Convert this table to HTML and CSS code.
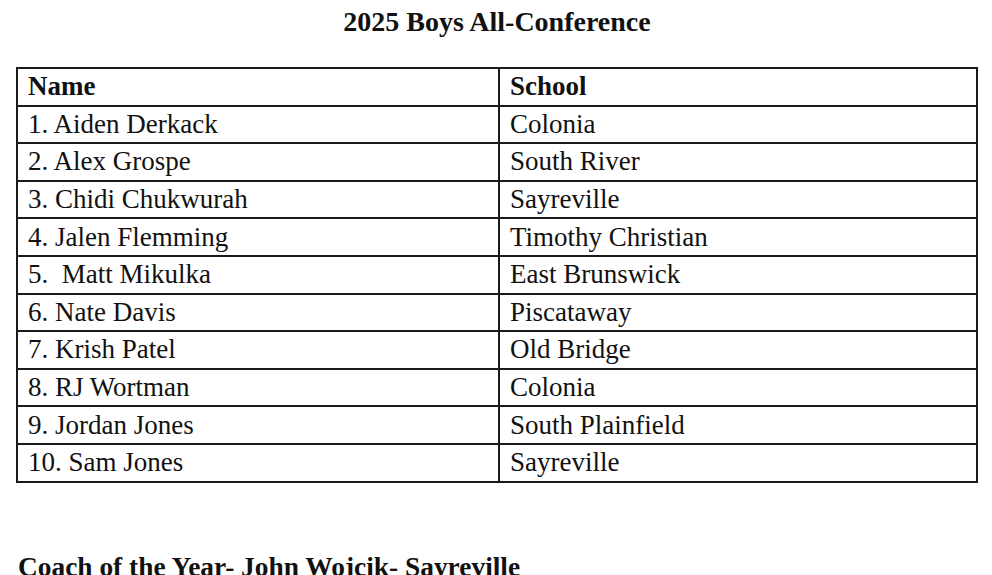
FILE: index.html
```html
<!DOCTYPE html>
<html>
<head>
<meta charset="utf-8">
<link rel="stylesheet" href="styles.css">
</head>
<body>
<div class="page">
  <h1 class="title">2025 Boys All-Conference</h1>
  <table class="roster">
    <tr class="head"><td class="c1">Name</td><td class="c2">School</td></tr>
    <tr><td>1. Aiden Derkack</td><td>Colonia</td></tr>
    <tr><td>2. Alex Grospe</td><td>South River</td></tr>
    <tr><td>3. Chidi Chukwurah</td><td>Sayreville</td></tr>
    <tr><td>4. Jalen Flemming</td><td>Timothy Christian</td></tr>
    <tr><td>5.&nbsp; Matt Mikulka</td><td>East Brunswick</td></tr>
    <tr><td>6. Nate Davis</td><td>Piscataway</td></tr>
    <tr><td>7. Krish Patel</td><td>Old Bridge</td></tr>
    <tr><td>8. RJ Wortman</td><td>Colonia</td></tr>
    <tr><td>9. Jordan Jones</td><td>South Plainfield</td></tr>
    <tr><td>10. Sam Jones</td><td>Sayreville</td></tr>
  </table>
  <p class="coach">Coach of the Year- John Wojcik- Sayreville</p>
</div>
</body>
</html>
```
FILE: styles.css
```css
html, body {
  margin: 0;
  padding: 0;
  background: #fff;
}
.page {
  font-family: "Liberation Serif", "Times New Roman", serif;
  color: #111;
  padding: 0 14px 0 16px;
}
.title {
  margin: 0;
  padding-top: 6px;
  height: 67px;
  box-sizing: border-box;
  text-align: center;
  font-size: 28px;
  font-weight: bold;
  line-height: 32px;
}
.roster {
  width: 962px;
  border-collapse: collapse;
  font-size: 27px;
}
.roster td {
  border: 2px solid #1a1a1a;
  height: 37.6px;
  box-sizing: border-box;
  padding: 0 10px;
  line-height: 35px;
  vertical-align: middle;
}
.roster td.c1 { width: 482px; }
.head td { font-weight: bold; }
.coach {
  margin: 68px 0 0 2px;
  font-size: 27.4px;
  font-weight: bold;
  line-height: 32px;
}
```
